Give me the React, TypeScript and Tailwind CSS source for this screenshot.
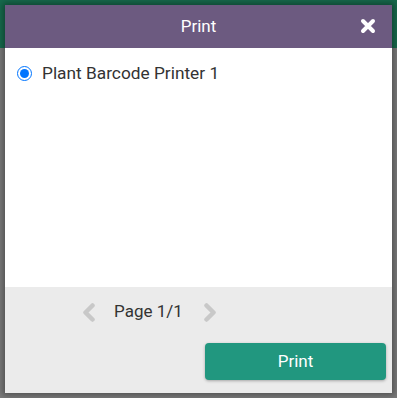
import React from "react";

export default function App() {
  return (
    <div className="relative w-[397px] h-[398px] bg-[#7a7a7a] overflow-hidden" style={{ fontFamily: "Roboto, 'Liberation Sans', sans-serif" }}>
      <div className="absolute left-0 top-0 w-full h-[48px] bg-[#17694c]" />
      <div className="absolute left-[5px] top-[5px] w-[387px] h-[388px] flex flex-col shadow-[0_0_6px_2px_rgba(0,0,0,0.35)]">
        <div className="h-[43px] bg-[#6c5a80] flex items-center justify-center relative shrink-0">
          <span className="text-white text-[17px]">Print</span>
          <svg className="absolute left-[355px] top-[13px]" width="16" height="16" viewBox="0 0 16 16">
            <path d="M3 3 L13 13 M13 3 L3 13" stroke="white" strokeWidth="4" strokeLinecap="round" />
          </svg>
        </div>
        <div className="h-[239px] bg-white px-[12px] pt-[13px] shrink-0">
          <label className="flex items-center gap-[10px]">
            <input type="radio" defaultChecked className="w-[15px] h-[15px] m-0 accent-[#0075ff]" />
            <span className="text-[17.3px] text-[#333]">Plant Barcode Printer 1</span>
          </label>
        </div>
        <div className="flex-1 bg-[#ebebeb] flex flex-col">
          <div className="flex items-center h-[50px] pl-[76px] gap-[17px]">
            <svg width="16" height="19" viewBox="0 0 16 19">
              <path d="M11.5 2.5 L4.5 9.5 L11.5 16.5" stroke="#c8c8c8" strokeWidth="4.5" fill="none" strokeLinecap="round" strokeLinejoin="round" />
            </svg>
            <span className="text-[17px] text-[#333]">Page 1/1</span>
            <svg width="16" height="19" viewBox="0 0 16 19" className="ml-[2px]">
              <path d="M4.5 2.5 L11.5 9.5 L4.5 16.5" stroke="#c8c8c8" strokeWidth="4.5" fill="none" strokeLinecap="round" strokeLinejoin="round" />
            </svg>
          </div>
          <div className="flex justify-end pr-[6px] pt-[6px]">
            <button className="w-[181px] h-[37px] rounded-[4px] bg-[#21977f] text-white text-[17px] shadow-[0_1px_3px_rgba(0,0,0,0.3)]">Print</button>
          </div>
        </div>
      </div>
    </div>
  );
}
